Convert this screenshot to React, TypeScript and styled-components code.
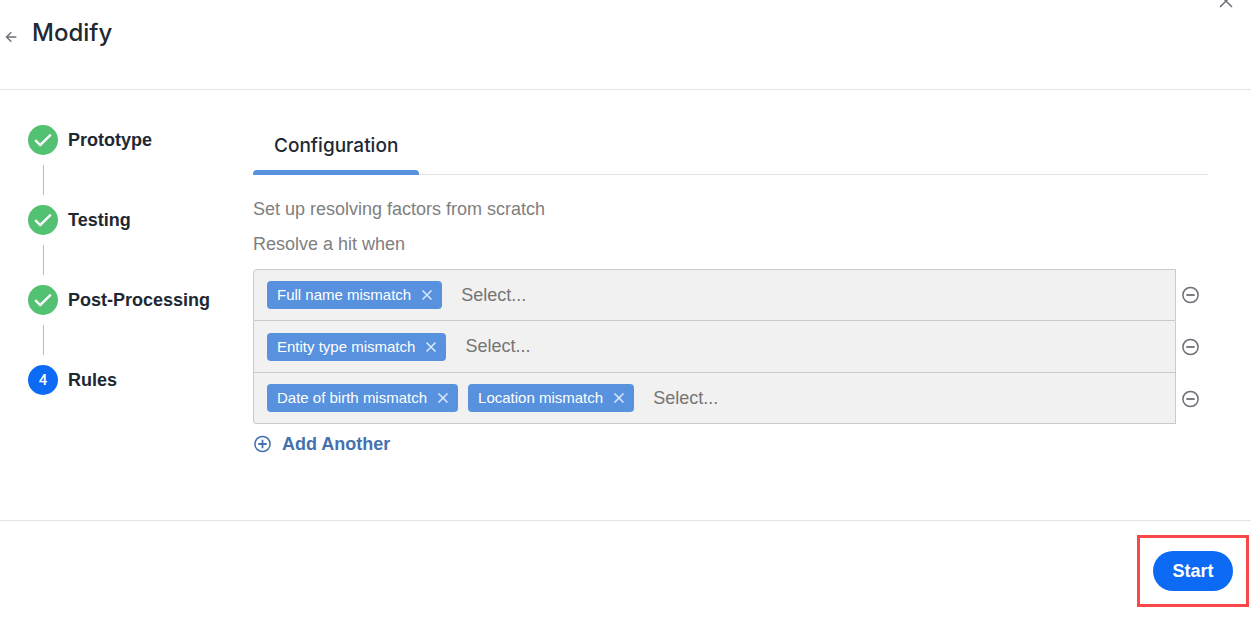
import React, { useState } from "react";
import styled, { createGlobalStyle } from "styled-components";

const GlobalStyle = createGlobalStyle`
  *, *::before, *::after { box-sizing: border-box; }
  body {
    margin: 0;
    background: #fff;
    color: #212832;
    font: 18px/20px "Liberation Sans", Arial, sans-serif;
  }
  button, input { font: inherit; }
`;

const Page = styled.div`
  position: relative;
  display: flex;
  flex-direction: column;
  min-height: 100vh;
  overflow: hidden;
`;

const Header = styled.header`
  display: flex;
  align-items: flex-start;
  gap: 12px;
  padding: 17px 4px 40px;
  border-bottom: 1px solid #e5e5e5;
`;

const IconButton = styled.button`
  display: inline-flex;
  flex: none;
  padding: 0;
  border: 0;
  background: none;
  color: ${(p) => p.color || "#6e6e76"};
  cursor: pointer;
`;

const BackButton = styled(IconButton)`
  margin-top: 12px;
`;

const CloseButton = styled(IconButton)`
  position: absolute;
  top: -7px;
  right: 17px;
`;

const Title = styled.h1`
  margin: 0;
  font: 500 24px/32px Inter, "Liberation Sans", sans-serif;
`;

const Body = styled.div`
  display: flex;
  padding: 35px 43px 66px 28px;
`;

const Steps = styled.ol`
  flex: none;
  width: 225px;
  margin: 0;
  padding: 0;
  list-style: none;
`;

const Step = styled.li`
  display: flex;
  align-items: center;
  gap: 10px;
  height: 30px;
  font-weight: 700;
`;

const Connector = styled.li`
  width: 1px;
  height: 30px;
  margin: 10px 15px;
  background: #b8b8b8;
`;

const StepBadge = styled.span<{ $done: boolean }>`
  display: grid;
  place-items: center;
  width: 30px;
  height: 30px;
  border-radius: 50%;
  background: ${(p) => (p.$done ? "#52c172" : "#0d6af5")};
  color: #fff;
  font: 500 15px/20px Roboto, "Liberation Sans", sans-serif;
`;

const Panel = styled.main`
  flex: 1;
  min-width: 0;
`;

const Tabs = styled.div`
  display: flex;
  height: 50px;
  border-bottom: 1px solid #e2e2e2;
`;

const Tab = styled.button`
  display: flex;
  flex-direction: column;
  justify-content: space-between;
  height: 50px;
  padding: 9px 0 0;
  border: 0;
  background: none;
  color: #212832;
  font: 500 19px/24px Inter, "Liberation Sans", sans-serif;
  cursor: pointer;

  &::after {
    content: "";
    width: 100%;
    height: 5px;
    border-radius: 4px 4px 0 0;
    background: #5891dd;
  }
`;

const TabLabel = styled.span`
  padding: 0 21px;
`;

const Hint = styled.p`
  margin: 0 0 15px;
  color: #808080;
`;

const Content = styled.div`
  padding-top: 24px;
`;

const Rules = styled.div`
  display: flex;
  flex-direction: column;
`;

const RuleRow = styled.div`
  display: flex;
  align-items: center;
  gap: 5px;
  padding-right: 8px;
`;

const RuleBox = styled.div`
  display: flex;
  flex: 1;
  align-items: center;
  gap: 10px;
  min-width: 0;
  min-height: 52px;
  padding: 0 13px;
  border: 1px solid #cacaca;
  border-top-width: 0;
  background: #f1f1f1;

  ${RuleRow}:first-child & {
    border-top-width: 1px;
    border-top-left-radius: 4px;
  }
  ${RuleRow}:last-child & {
    min-height: 51px;
    border-bottom-left-radius: 4px;
  }
`;

const Chip = styled.span`
  display: inline-flex;
  flex: none;
  align-items: center;
  gap: 10px;
  height: 28px;
  padding: 0 9px 0 10px;
  border-radius: 4px;
  background: #5891dd;
  color: #fff;
  font-size: 15px;
`;

const FactorInput = styled.input`
  flex: 1;
  min-width: 60px;
  height: 28px;
  padding: 0 9px;
  border: 0;
  outline: 0;
  background: none;
  color: #212832;

  &::placeholder {
    color: #757575;
    opacity: 1;
  }
`;

const AddButton = styled.button`
  display: flex;
  align-items: center;
  gap: 10px;
  margin-top: 10px;
  padding: 0;
  border: 0;
  background: none;
  color: #4471b0;
  font-weight: 700;
  cursor: pointer;
`;

const Footer = styled.footer`
  display: flex;
  justify-content: flex-end;
  padding: 14px 2px 19px;
  border-top: 1px solid #e5e5e5;
`;

const Highlight = styled.div`
  padding: 13px;
  border: 3px solid #fb4747;
`;

const StartButton = styled.button`
  display: block;
  width: 80px;
  height: 40px;
  padding: 0;
  border: 0;
  border-radius: 20px;
  background: #0d6af5;
  color: #fff;
  font-weight: 700;
  cursor: pointer;
`;

const CloseIcon = () => (
  <svg width="16" height="16" viewBox="0 0 16 16" fill="none" stroke="currentColor" strokeWidth="1.5" aria-hidden="true">
    <path d="M2 2l12 12M14 2L2 14" />
  </svg>
);

const RemoveIcon = () => (
  <svg width="12" height="12" viewBox="0 0 12 12" fill="none" stroke="currentColor" strokeWidth="1.5" aria-hidden="true">
    <path d="M1.5 1.5l9 9M10.5 1.5l-9 9" />
  </svg>
);

const CircleSign = ({ plus }: { plus?: boolean }) => (
  <svg width="19" height="18" viewBox="0 0 19 18" fill="none" stroke="currentColor" strokeWidth="1.5" aria-hidden="true">
    <circle cx="9.5" cy="9" r="7.6" />
    <path d={plus ? "M5.3 9h8.4M9.5 4.8v8.4" : "M5.3 9h8.4"} strokeWidth="1.8" />
  </svg>
);

const steps = [
  { name: "Prototype", done: true },
  { name: "Testing", done: true },
  { name: "Post-Processing", done: true },
  { name: "Rules", done: false },
];

const initialRules = [
  ["Full name mismatch"],
  ["Entity type mismatch"],
  ["Date of birth mismatch", "Location mismatch"],
];

export default function App() {
  const [rules, setRules] = useState(initialRules);

  const removeFactor = (row: number, factor: string) =>
    setRules(rules.map((r, i) => (i === row ? r.filter((f) => f !== factor) : r)));

  return (
    <Page>
      <GlobalStyle />
      <Header>
        <BackButton type="button" aria-label="Back">
          <svg width="16" height="16" viewBox="0 0 16 16" fill="none" stroke="currentColor" strokeWidth="1.4" aria-hidden="true">
            <path d="M12.3 8H2.6M7.3 3.2L2.5 8l4.8 4.8" />
          </svg>
        </BackButton>
        <Title>Modify</Title>
      </Header>
      <CloseButton type="button" aria-label="Close">
        <CloseIcon />
      </CloseButton>

      <Body>
        <Steps>
          {steps.map((step, i) => (
            <React.Fragment key={step.name}>
              {i > 0 && <Connector aria-hidden="true" />}
              <Step aria-current={step.done ? undefined : "step"}>
                <StepBadge $done={step.done}>
                  {step.done ? (
                    <svg width="18" height="14" viewBox="0 0 18 14" fill="none" stroke="#fff" strokeWidth="2.4" aria-hidden="true">
                      <path d="M1.2 7.2l5 4.8L16.8 1.6" />
                    </svg>
                  ) : (
                    i + 1
                  )}
                </StepBadge>
                {step.name}
              </Step>
            </React.Fragment>
          ))}
        </Steps>

        <Panel>
          <Tabs role="tablist">
            <Tab type="button" role="tab" aria-selected="true">
              <TabLabel>Configuration</TabLabel>
            </Tab>
          </Tabs>
          <Content>
            <Hint>Set up resolving factors from scratch</Hint>
            <Hint>Resolve a hit when</Hint>
            <Rules>
              {rules.map((factors, row) => (
                <RuleRow key={row}>
                  <RuleBox>
                    {factors.map((factor) => (
                      <Chip key={factor}>
                        {factor}
                        <IconButton type="button" color="#dbe9fb" aria-label={`Remove ${factor}`} onClick={() => removeFactor(row, factor)}>
                          <RemoveIcon />
                        </IconButton>
                      </Chip>
                    ))}
                    <FactorInput type="text" placeholder="Select..." aria-label={`Factors of rule ${row + 1}`} />
                  </RuleBox>
                  <IconButton type="button" aria-label={`Remove rule ${row + 1}`} onClick={() => setRules(rules.filter((_, i) => i !== row))}>
                    <CircleSign />
                  </IconButton>
                </RuleRow>
              ))}
            </Rules>
            <AddButton type="button" onClick={() => setRules([...rules, []])}>
              <CircleSign plus />
              Add Another
            </AddButton>
          </Content>
        </Panel>
      </Body>

      <Footer>
        <Highlight>
          <StartButton type="button">Start</StartButton>
        </Highlight>
      </Footer>
    </Page>
  );
}
